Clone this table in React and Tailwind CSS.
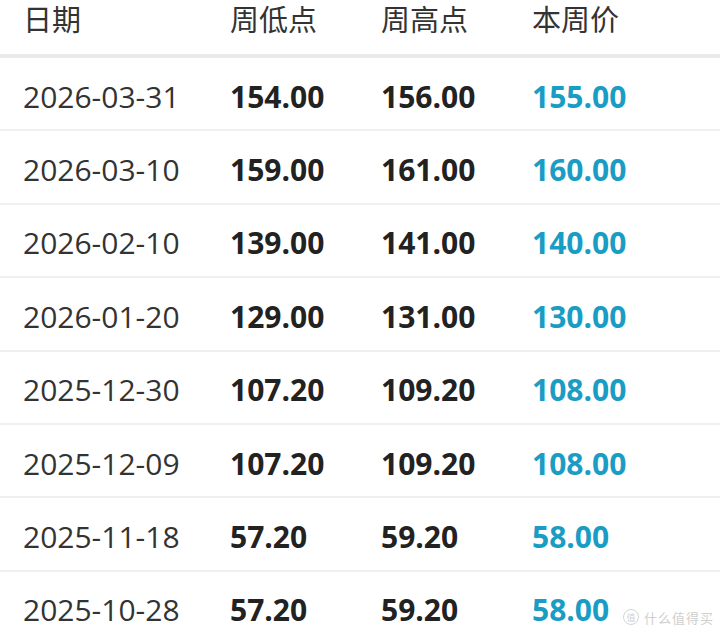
import React from "react";

const rows = [
    ["2026-03-31", "154.00", "156.00", "155.00"],
    ["2026-03-10", "159.00", "161.00", "160.00"],
    ["2026-02-10", "139.00", "141.00", "140.00"],
    ["2026-01-20", "129.00", "131.00", "130.00"],
    ["2025-12-30", "107.20", "109.20", "108.00"],
    ["2025-12-09", "107.20", "109.20", "108.00"],
    ["2025-11-18", "57.20", "59.20", "58.00"],
    ["2025-10-28", "57.20", "59.20", "58.00"],
];

const font = { fontFamily: '"Open Sans", "Noto Sans CJK SC", sans-serif' };

const App = () => {
    return (
        <div className="relative w-[720px] h-[635px] overflow-hidden bg-white" style={font}>
            {/* header */}
            <div className="flex h-[58px] items-start pt-[2px] pl-[23px] text-[29px] leading-[36px] text-[#333] border-b-[4px] border-[#e9e9e9]">
                <div className="w-[207px]">日期</div>
                <div className="w-[151px]">周低点</div>
                <div className="w-[151px]">周高点</div>
                <div>本周价</div>
            </div>

            {/* rows */}
            {rows.map((r) => (
                <div key={r[0]} className="flex h-[73.4px] items-center pl-[23px] pt-[5px] text-[30px] border-b-2 border-[#f0f0f0]">
                    <div className="w-[207px] text-[#333]">{r[0]}</div>
                    <div className="w-[151px] font-bold text-[#222]">{r[1]}</div>
                    <div className="w-[151px] font-bold text-[#222]">{r[2]}</div>
                    <div className="font-bold text-[#1a9dc4]">{r[3]}</div>
                </div>
            ))}

            {/* watermark */}
            <div className="absolute right-[6px] bottom-[8px] flex items-center gap-[5px] text-[13px] text-[#cfcfcf]" style={{ fontFamily: '"Noto Sans CJK SC", sans-serif' }}>
                <span className="flex h-[16px] w-[16px] items-center justify-center rounded-full border border-[#d4d4d4] text-[9px]">值</span>
                <span className="tracking-[1px]">什么值得买</span>
            </div>
        </div>
    );
};

export default App;
